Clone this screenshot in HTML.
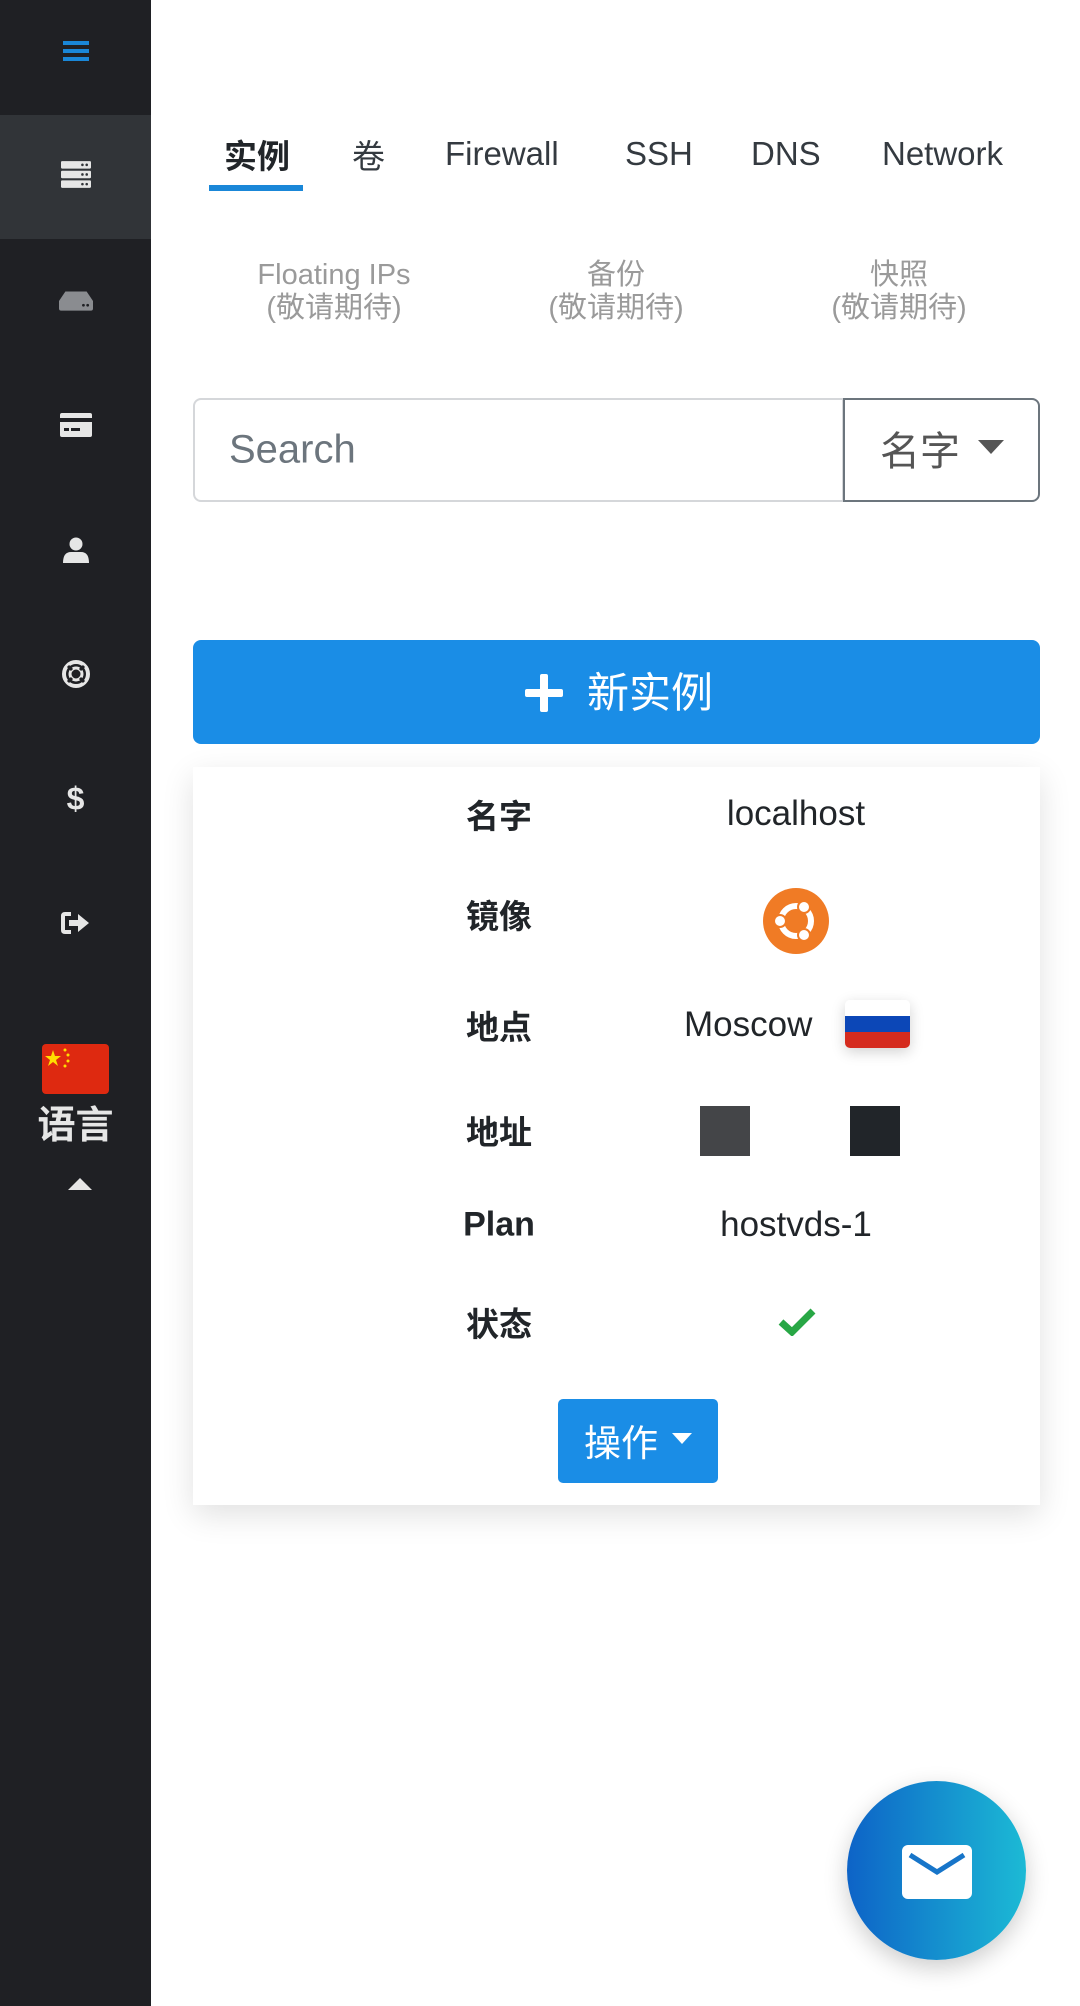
<!DOCTYPE html>
<html><head><meta charset="utf-8"><style>
*{margin:0;padding:0;box-sizing:border-box}
body{width:1080px;height:2006px;background:#fff;position:relative;overflow:hidden;font-family:"Liberation Sans","Noto Sans CJK SC",sans-serif;color:#212529}
.side{position:absolute;left:0;top:0;width:151px;height:2006px;background:#1f2024}
.act{position:absolute;left:0;top:115px;width:151px;height:124px;background:#313438}
.ic{position:absolute;left:50%;transform:translate(-50%,-50%)}
.abs{position:absolute}
.tab{position:absolute;top:154px;transform:translateY(-50%);font-size:33px;color:#343a40}
.soon{position:absolute;top:272px;transform:translateX(-50%);text-align:center;color:#9a9a9a;font-size:29px;line-height:33px}
.lbl{position:absolute;left:499px;transform:translate(-50%,-50%);font-weight:bold;font-size:33px;color:#212529}
.val{position:absolute;left:796px;transform:translate(-50%,-50%);font-size:35px;color:#212529}
</style></head><body>
<div class="side">
 <div class="act"></div>
 <svg class="ic" style="top:51px" width="26" height="22" viewBox="0 0 26 22"><rect y="1" width="26" height="4" fill="#1a87d8"/><rect y="9" width="26" height="4" fill="#1a87d8"/><rect y="17" width="26" height="4" fill="#1a87d8"/></svg>
 <svg class="ic" style="top:175px" width="30" height="28" viewBox="0 0 28 26"><g fill="#e6e6e6"><rect y="0" width="28" height="7" rx="1"/><rect y="9" width="28" height="7" rx="1"/><rect y="18" width="28" height="7" rx="1"/></g><g fill="#313438"><circle cx="20" cy="3.5" r="1.2"/><circle cx="24" cy="3.5" r="1.2"/><circle cx="20" cy="12.5" r="1.2"/><circle cx="24" cy="12.5" r="1.2"/><circle cx="20" cy="21.5" r="1.2"/><circle cx="24" cy="21.5" r="1.2"/></g></svg>
 <svg class="ic" style="top:301px" width="34" height="20" viewBox="0 0 32 18"><path d="M6 0H26L32 9V16Q32 18 30 18H2Q0 18 0 16V9Z" fill="#8a8c90"/><circle cx="23" cy="13" r="1.3" fill="#1f2024"/><circle cx="27" cy="13" r="1.3" fill="#1f2024"/></svg>
 <svg class="ic" style="top:425px" width="32" height="24" viewBox="0 0 32 24"><rect width="32" height="24" rx="2" fill="#e6e6e6"/><rect y="5" width="32" height="4" fill="#1f2024"/><rect x="4" y="15" width="5" height="3" fill="#1f2024"/><rect x="11" y="15" width="9" height="3" fill="#1f2024"/></svg>
 <svg class="ic" style="top:550px" width="26" height="26" viewBox="0 0 26 26"><circle cx="13" cy="7" r="6.5" fill="#e6e6e6"/><path d="M0 26Q0 15 8 15H18Q26 15 26 26Z" fill="#e6e6e6"/></svg>
 <svg class="ic" style="top:674px" width="28" height="28" viewBox="0 0 28 28"><circle cx="14" cy="14" r="12" fill="none" stroke="#e6e6e6" stroke-width="4"/><circle cx="14" cy="14" r="6" fill="none" stroke="#e6e6e6" stroke-width="3"/><path d="M6 6L10 10M22 6L18 10M6 22L10 18M22 22L18 18" stroke="#1f2024" stroke-width="3"/></svg>
 <div class="ic abs" style="top:799px;color:#e6e6e6;font-weight:bold;font-size:32px">$</div>
 <svg class="ic" style="top:923px" width="30" height="24" viewBox="0 0 30 24"><path d="M10 3H4Q2 3 2 5V19Q2 21 4 21H10" fill="none" stroke="#e6e6e6" stroke-width="4"/><path d="M8 9H17V3L28 12L17 21V15H8Z" fill="#e6e6e6"/></svg>
 <svg class="abs" style="left:42px;top:1044px" width="67" height="50" viewBox="0 0 67 50"><rect width="67" height="50" rx="4" fill="#de2910"/><polygon points="11,6 13,12 19,12 14,16 16,22 11,18 6,22 8,16 3,12 9,12" fill="#ffde00"/><circle cx="23" cy="6" r="1.5" fill="#ffde00"/><circle cx="26" cy="11" r="1.5" fill="#ffde00"/><circle cx="26" cy="17" r="1.5" fill="#ffde00"/><circle cx="23" cy="22" r="1.5" fill="#ffde00"/></svg>
 <div class="abs" style="left:0;width:151px;top:1104px;text-align:center;color:#e6e6e6;font-weight:bold;font-size:38px;line-height:44px">语言</div>
 <svg class="abs" style="left:68px;top:1177px" width="24" height="13" viewBox="0 0 24 13"><path d="M0 13L12 1L24 13Z" fill="#e6e6e6"/></svg>
</div>

<div class="tab" style="left:224px;font-weight:bold;color:#212529">实例</div>
<div class="abs" style="left:209px;top:185px;width:94px;height:6px;background:#1a87d8"></div>
<div class="tab" style="left:352px">卷</div>
<div class="tab" style="left:445px">Firewall</div>
<div class="tab" style="left:625px">SSH</div>
<div class="tab" style="left:751px">DNS</div>
<div class="tab" style="left:882px">Network</div>

<div class="soon" style="left:334px;top:259px">Floating IPs<br>(敬请期待)</div>
<div class="soon" style="left:616px;top:259px">备份<br>(敬请期待)</div>
<div class="soon" style="left:899px;top:259px">快照<br>(敬请期待)</div>

<div class="abs" style="left:193px;top:398px;width:651px;height:104px;border:2px solid #d5d7da;border-radius:8px 0 0 8px"></div>
<div class="abs" style="left:229px;top:450px;transform:translateY(-50%);font-size:40px;color:#6c757d">Search</div>
<div class="abs" style="left:843px;top:398px;width:197px;height:104px;border:2px solid #6c757d;border-radius:0 8px 8px 0"></div>
<div class="abs" style="left:880px;top:448px;transform:translateY(-50%);font-size:40px;color:#555">名字</div>
<svg class="abs" style="left:978px;top:440px" width="26" height="14" viewBox="0 0 26 14"><path d="M0 0H26L13 14Z" fill="#555"/></svg>

<div class="abs" style="left:193px;top:640px;width:847px;height:104px;background:#1a8de6;border-radius:8px"></div>
<svg class="abs" style="left:525px;top:674px" width="38" height="38" viewBox="0 0 38 38"><rect x="15" width="8" height="38" rx="2" fill="#fff"/><rect y="15" width="38" height="8" rx="2" fill="#fff"/></svg>
<div class="abs" style="left:587px;top:690px;transform:translateY(-50%);font-size:42px;color:#fff">新实例</div>

<div class="abs" style="left:193px;top:767px;width:847px;height:738px;background:#fff;box-shadow:0 10px 30px rgba(0,0,0,.12)"></div>
<div class="lbl" style="top:814px">名字</div><div class="val" style="top:814px">localhost</div>
<div class="lbl" style="top:914px">镜像</div>
<svg class="abs" style="left:763px;top:888px" width="66" height="66" viewBox="0 0 66 66"><circle cx="33" cy="33" r="33" fill="#f07b25"/><circle cx="33" cy="33" r="15" fill="none" stroke="#fff" stroke-width="6"/><circle cx="17" cy="33" r="6" fill="#fff" stroke="#f07b25" stroke-width="2"/><circle cx="41" cy="19" r="6" fill="#fff" stroke="#f07b25" stroke-width="2"/><circle cx="41" cy="47" r="6" fill="#fff" stroke="#f07b25" stroke-width="2"/></svg>
<div class="lbl" style="top:1025px">地点</div>
<div class="abs" style="left:684px;top:1025px;transform:translateY(-50%);font-size:35px">Moscow</div>
<div class="abs" style="left:845px;top:1000px;width:65px;height:48px;border-radius:5px;overflow:hidden;box-shadow:0 4px 14px rgba(0,0,0,.18)"><div style="height:16px;background:#fff"></div><div style="height:16px;background:#0c47b7"></div><div style="height:16px;background:#d52b1e"></div></div>
<div class="lbl" style="top:1130px">地址</div>
<div class="abs" style="left:700px;top:1106px;width:50px;height:50px;background:#444548"></div>
<div class="abs" style="left:850px;top:1106px;width:50px;height:50px;background:#212529"></div>
<div class="lbl" style="top:1225px;font-size:34px">Plan</div>
<div class="val" style="top:1225px">hostvds-1</div>
<div class="lbl" style="top:1322px">状态</div>
<svg class="abs" style="left:778px;top:1308px" width="38" height="28" viewBox="0 0 38 28"><path d="M3 14L14 24L35 3" fill="none" stroke="#28a745" stroke-width="7"/></svg>
<div class="abs" style="left:558px;top:1399px;width:160px;height:84px;background:#1a8de6;border-radius:5px"></div>
<div class="abs" style="left:584px;top:1440px;transform:translateY(-50%);font-size:37px;color:#fff">操作</div>
<svg class="abs" style="left:672px;top:1433px" width="20" height="11" viewBox="0 0 20 11"><path d="M0 0H20L10 11Z" fill="#fff"/></svg>

<div class="abs" style="left:847px;top:1781px;width:179px;height:179px;border-radius:50%;background:linear-gradient(90deg,#0d63c7,#1cbad5);box-shadow:0 8px 24px rgba(0,0,0,.2)"></div>
<svg class="abs" style="left:902px;top:1845px" width="70" height="54" viewBox="0 0 70 54"><rect width="70" height="54" rx="6" fill="#fff"/><path d="M8 10L35 27L62 10" fill="none" stroke="#1775c9" stroke-width="5"/></svg>
</body></html>
